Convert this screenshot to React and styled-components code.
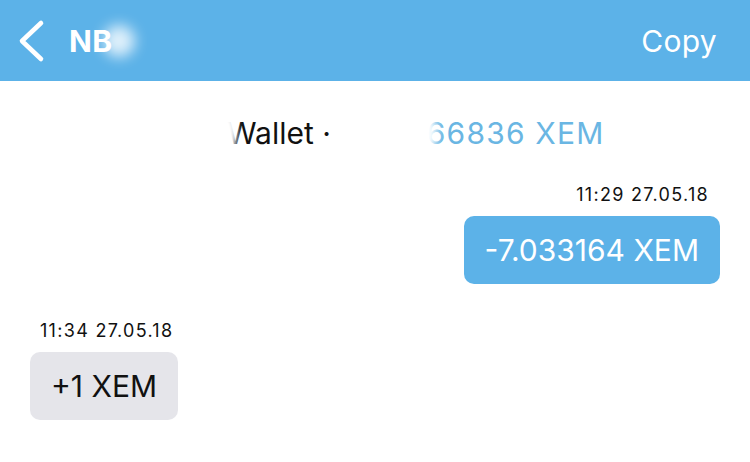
import React from "react";
import styled, { createGlobalStyle } from "styled-components";

const Global = createGlobalStyle`
  html, body { margin: 0; padding: 0; background: #fff; }
  body { font-family: Inter, "Noto Sans", "Liberation Sans", sans-serif; -webkit-font-smoothing: antialiased; }
`;

const Page = styled.div`
  width: 750px;
  height: 462px;
  background: #fff;
  overflow: hidden;
`;

const Header = styled.header`
  height: 81px;
  background: #5cb2e8;
  display: flex;
  align-items: center;
  justify-content: space-between;
  padding: 0 33px 0 17px;
  box-sizing: border-box;
  color: #fff;
`;

const Left = styled.div`
  display: flex;
  align-items: center;
  gap: 24px;
`;

const Title = styled.span`
  position: relative;
  font-size: 30px;
  font-weight: 700;
  letter-spacing: 0.4px;
`;

const Smudge = styled.span`
  position: absolute;
  top: 50%;
  left: ${(p) => p.$left}px;
  width: ${(p) => p.$w}px;
  height: ${(p) => p.$h}px;
  transform: translateY(-50%);
  border-radius: 50%;
  background: ${(p) => p.$color};
  filter: blur(${(p) => p.$blur}px);
  pointer-events: none;
`;

const Action = styled.span`
  font-size: 30px;
  font-weight: 400;
  letter-spacing: 0.3px;
`;

const WalletRow = styled.div`
  display: flex;
  align-items: baseline;
  padding: 34px 0 0 227px;
  font-size: 30px;
  height: 40px;
`;

const WalletName = styled.span`
  position: relative;
  color: #111;
`;

const Gap = styled.span`
  display: inline-block;
  width: 96px;
`;

const Balance = styled.span`
  position: relative;
  color: #6ab6e3;
  letter-spacing: 1.2px;
`;

const Feed = styled.div`
  display: flex;
  flex-direction: column;
  padding: 0 30px;
  margin-top: 29px;
`;

const Message = styled.div`
  display: flex;
  flex-direction: column;
  align-items: ${(p) => (p.$out ? "flex-end" : "flex-start")};
  margin-top: ${(p) => p.$mt}px;
`;

const Stamp = styled.div`
  font-size: 18px;
  letter-spacing: 1.3px;
  color: #111;
  margin: 0 ${(p) => (p.$out ? "11px" : "0")} 0 ${(p) => (p.$out ? "0" : "10px")};
  line-height: 22px;
`;

const Bubble = styled.div`
  margin-top: 10px;
  height: 68px;
  box-sizing: border-box;
  padding: 0 21px;
  display: flex;
  align-items: center;
  border-radius: 10px;
  font-size: 30px;
  background: ${(p) => (p.$out ? "#5cb2e8" : "#e5e5ea")};
  color: ${(p) => (p.$out ? "#fff" : "#111")};
`;

const Back = () => (
  <svg width="28" height="44" viewBox="0 0 28 44" fill="none">
    <path d="M24 4 L5 22 L24 40" stroke="#fff" strokeWidth="4.6" strokeLinecap="round" strokeLinejoin="round" />
  </svg>
);

export default function App() {
  return (
    <Page>
      <Global />
      <Header>
        <Left>
          <Back />
          <Title>
            NB
            <Smudge $left={34} $w={32} $h={32} $color="rgba(255,255,255,0.8)" $blur={7} />
          </Title>
        </Left>
        <Action>Copy</Action>
      </Header>
      <WalletRow>
        <WalletName>
          Wallet ·
          <Smudge $left={-8} $w={18} $h={40} $color="#fff" $blur={3} />
        </WalletName>
        <Gap />
        <Balance>
          66836 XEM
          <Smudge $left={-12} $w={22} $h={40} $color="#fff" $blur={4} />
        </Balance>
      </WalletRow>
      <Feed>
        <Message $out $mt={0}>
          <Stamp $out>11:29 27.05.18</Stamp>
          <Bubble $out>-7.033164 XEM</Bubble>
        </Message>
        <Message $mt={36}>
          <Stamp>11:34 27.05.18</Stamp>
          <Bubble>+1 XEM</Bubble>
        </Message>
      </Feed>
    </Page>
  );
}
